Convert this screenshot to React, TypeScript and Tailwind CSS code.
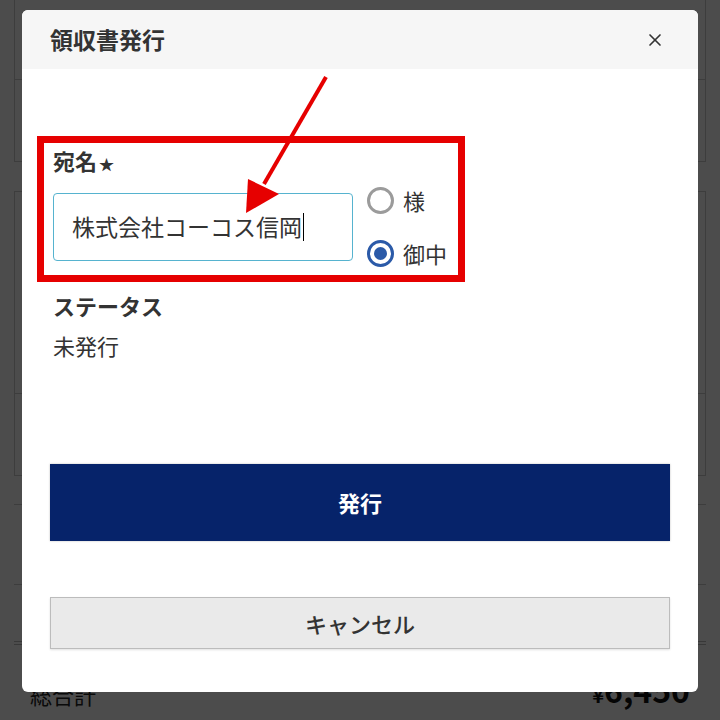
import { X } from "lucide-react";

const font = {
  fontFamily: '"Noto Sans CJK JP", "Noto Sans", sans-serif',
};

function BackgroundPage() {
  return (
    <div className="px-[14px]">
      <div className="border-x border-b border-[#cccccc]">
        <div className="h-[80px] border-b border-[#cccccc]" />
        <div className="h-[81px]" />
      </div>
      <div className="mt-[29px] border border-[#cccccc]">
        <div className="h-[202px] border-b border-[#cccccc]" />
        <div className="h-[81px]" />
      </div>
      <div className="mt-[28px] border-t border-[#cccccc]" />
      <div className="mt-[79px] border-t border-[#cccccc]" />
      <div className="mt-[56px] h-[4px] border-y border-[#bbbbbb]" />
      <div className="flex h-[60px] items-end justify-between px-[16px]">
        <span className="text-[22px] leading-none text-[#222]">総合計</span>
        <span className="font-bold leading-none text-[#111]">
          <span className="text-[20px]">¥</span>
          <span className="text-[32px]">6,450</span>
        </span>
      </div>
    </div>
  );
}

function Radio({ label, checked }: { label: string; checked?: boolean }) {
  return (
    <label className="flex h-[30px] items-center">
      <span
        className={
          checked
            ? "flex h-[27px] w-[27px] items-center justify-center rounded-full border-[3px] border-[#2b5aa8] bg-white"
            : "flex h-[27px] w-[27px] items-center justify-center rounded-full border-[3px] border-[#9b9b9b] bg-white"
        }
      >
        {checked && <span className="h-[13px] w-[13px] rounded-full bg-[#2b5aa8]" />}
      </span>
      <span className="ml-[9px] text-[22px] leading-[30px] text-[#333]">{label}</span>
    </label>
  );
}

function ReceiptModal() {
  return (
    <div className="absolute left-[22px] top-[10px] w-[676px] rounded-[6px] bg-white">
      <div className="flex h-[59px] items-center justify-between rounded-t-[6px] bg-[#f6f6f6] pl-[28px] pr-[33px]">
        <h2 className="text-[23px] font-bold leading-none text-[#333]">領収書発行</h2>
        <X className="h-[20px] w-[20px] text-[#333]" strokeWidth={2} />
      </div>

      <div className="px-[28px] pb-[43px] pt-[76px]">
        <div className="px-[3px]">
          <div className="flex h-[30px] items-baseline text-[22px] font-bold leading-[30px] text-[#333]">
            宛名<span className="ml-[2px] text-[15px] leading-none">★</span>
          </div>
          <div className="mt-[10px] flex items-center">
            <div className="flex h-[68px] w-[300px] items-center rounded-[4px] border border-[#56b3cf] pl-[18px] text-[23px] text-[#333]">
              株式会社コーコス信岡
              <span className="ml-px h-[28px] w-px bg-black" />
            </div>
            <div className="ml-[14px] flex flex-col gap-[23px]">
              <Radio label="様" />
              <Radio label="御中" checked />
            </div>
          </div>
          <div className="mt-[22px] text-[22px] font-bold leading-[30px] text-[#333]">
            ステータス
          </div>
          <div className="mt-[10px] text-[22px] leading-[30px] text-[#333]">未発行</div>
        </div>

        <button className="mt-[104px] flex h-[77px] w-full items-center justify-center bg-[#06236a] text-[22px] font-bold text-white shadow-[0_0_2px_rgba(0,0,0,0.25)]">
          発行
        </button>
        <button className="mt-[56px] flex h-[52px] w-full items-center justify-center border border-[#bcbcbc] bg-[#eaeaea] text-[22px] font-medium text-[#333] shadow-[0_1px_2px_rgba(0,0,0,0.12)]">
          キャンセル
        </button>
      </div>
    </div>
  );
}

export default function App() {
  return (
    <div className="relative h-[720px] w-[720px] overflow-hidden bg-white" style={font}>
      <BackgroundPage />
      <div className="absolute inset-0 bg-black/70" />
      <ReceiptModal />

      {/* annotation */}
      <div className="pointer-events-none absolute left-[37px] top-[136px] h-[146px] w-[428px] border-[7px] border-[#e60000]" />
      <svg
        className="pointer-events-none absolute left-0 top-0"
        width="720"
        height="720"
        viewBox="0 0 720 720"
      >
        <line x1="326" y1="77" x2="264" y2="184" stroke="#e60000" strokeWidth="4" />
        <polygon points="246,213 248,179 279,194" fill="#e60000" />
      </svg>
    </div>
  );
}
